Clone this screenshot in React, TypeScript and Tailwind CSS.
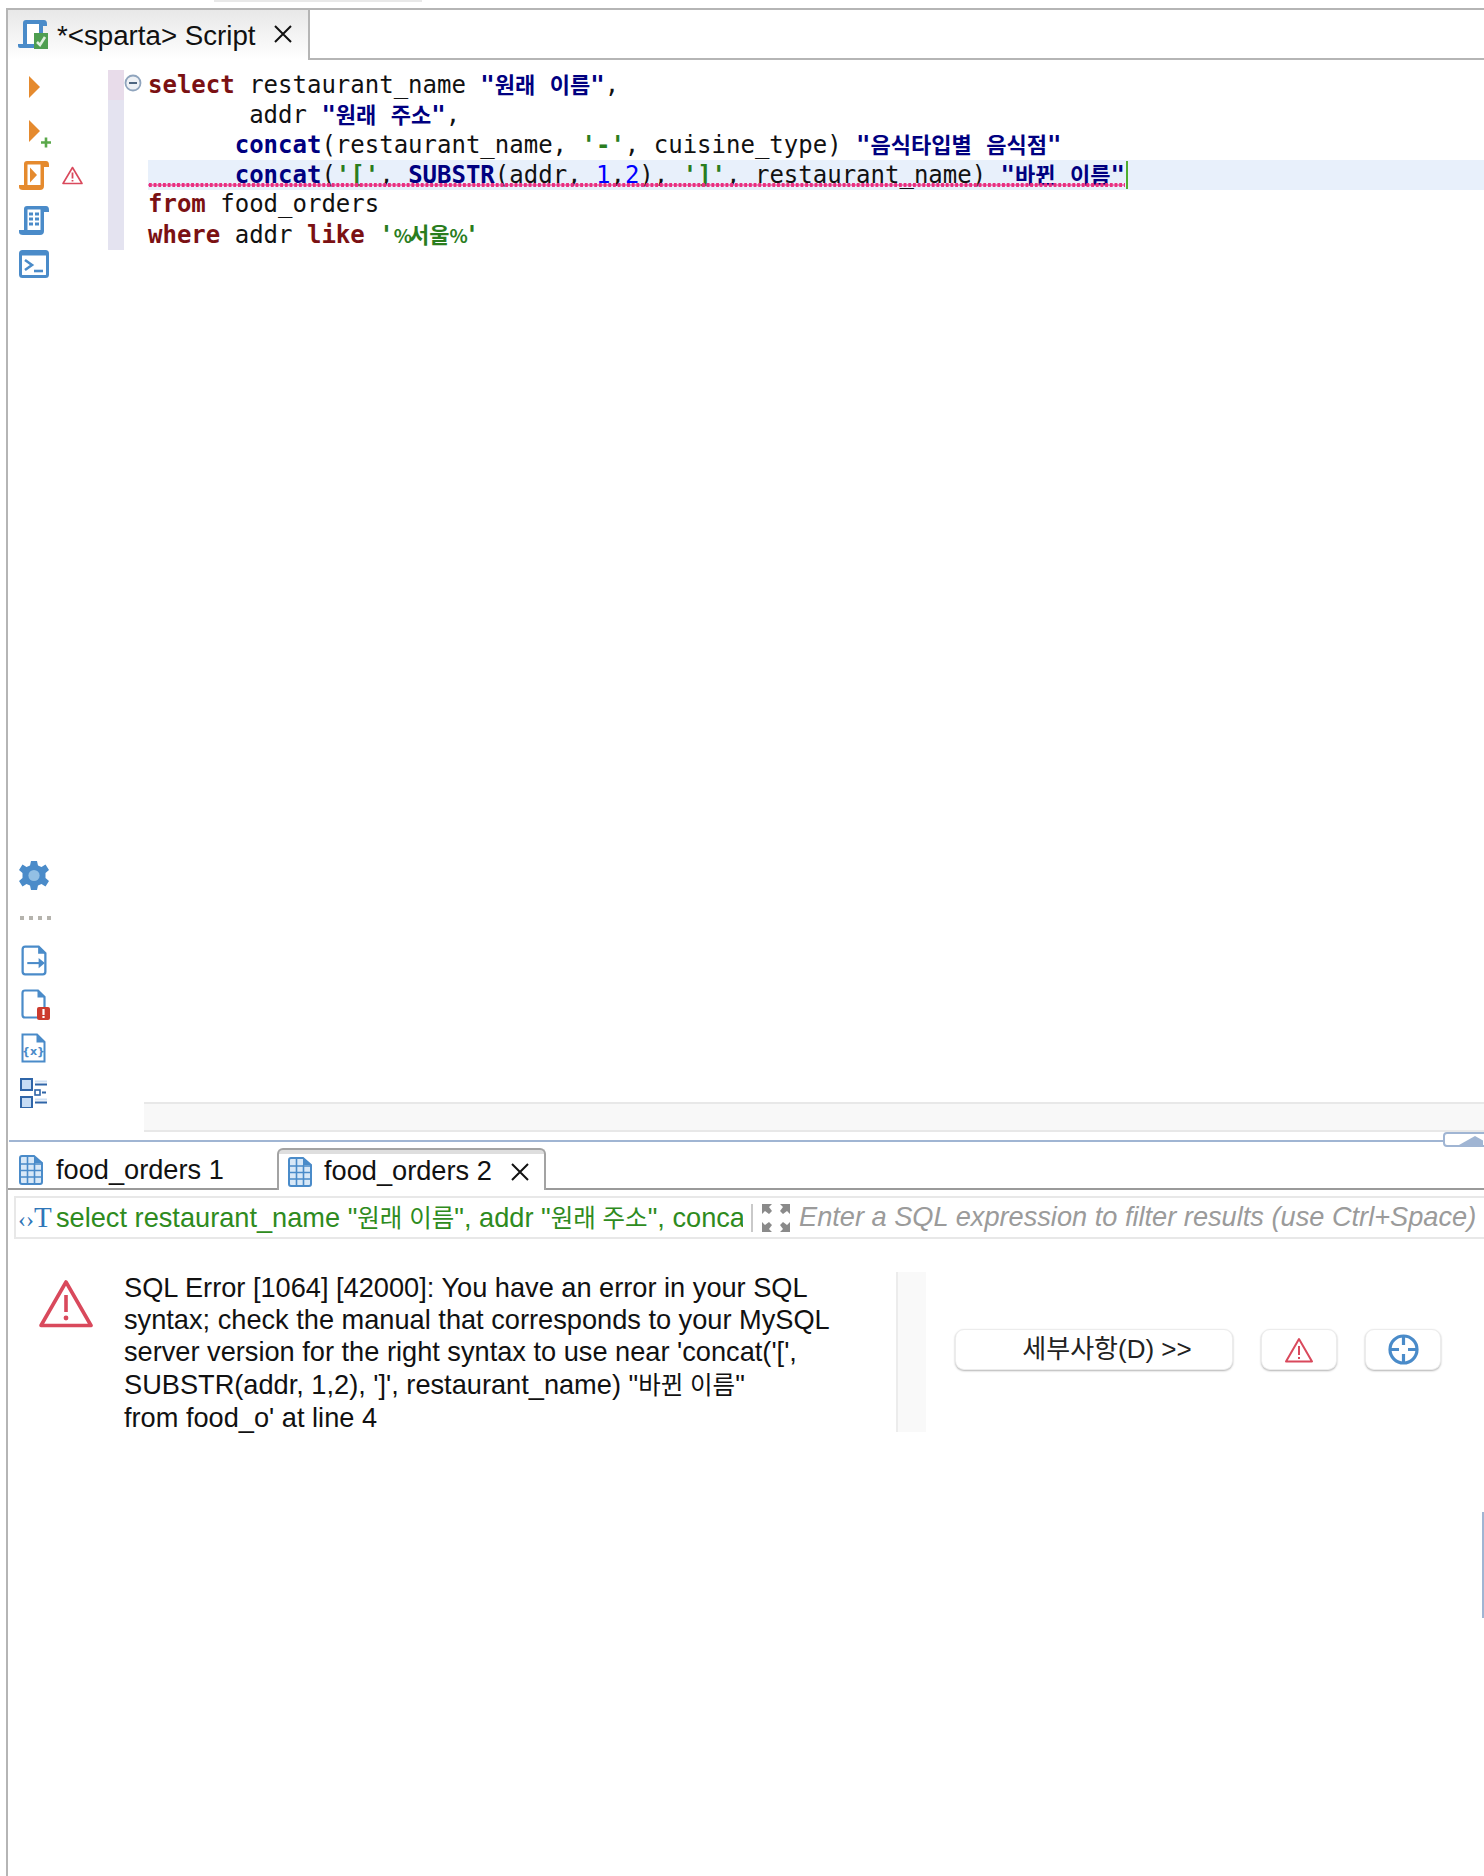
import React from "react";

const BLUE = "#4a8bc9";
const ORANGE = "#e58a2e";
const RED = "#d9495c";

function Kr({ children }: { children: React.ReactNode }) {
  return <span className="text-[22px] font-['Noto_Sans_CJK_KR']">{children}</span>;
}
const Ks = ({ c }: { c: string }) => <span className="text-[24.5px]">{c}</span>;
const Kw = ({ c }: { c: string }) => <span className="font-bold text-[#7b1113]">{c}</span>;
const Fn = ({ c }: { c: string }) => <span className="font-bold text-[#000080]">{c}</span>;
const Str = ({ c }: { c: string }) => <span className="font-bold text-[#2a7d1e]">{c}</span>;
const Num = ({ c }: { c: string }) => <span className="text-[#0000ff]">{c}</span>;
const Alias = ({ a, b }: { a: string; b: string }) => (
  <span className="font-bold text-[#000080]">
    &quot;<Kr>{a}</Kr> <Kr>{b}</Kr>&quot;
  </span>
);

function ScrollIcon({ color, children }: { color: string; children?: React.ReactNode }) {
  return (
    <svg width="30" height="30" viewBox="0 0 30 30">
      <path d="M5 25V4Q5 1 8 1H27Q30 1 30 5V7H25V26Q25 30 21 30H4Q0 30 0 27V25Z" fill={color} />
      <rect x="8.5" y="4.5" width="13" height="20.5" fill="#fff" />
      <path d="M21 25H5V27H21Z" fill={color} />
      {children}
    </svg>
  );
}

function DocOutline({ children }: { children?: React.ReactNode }) {
  return (
    <>
      <path d="M4 1.5H17L23.5 8V26Q23.5 28.5 21 28.5H4Q1.5 28.5 1.5 26V4Q1.5 1.5 4 1.5Z" fill="#fff" stroke={BLUE} strokeWidth="2.2" />
      <path d="M16.5 1.5V8.5H24Z" fill={BLUE} />
      {children}
    </>
  );
}

function TableIcon() {
  return (
    <svg width="24" height="30" viewBox="0 0 24 30" className="shrink-0">
      <path d="M1 3Q1 1 3 1H15L23 8V27Q23 29 21 29H3Q1 29 1 27Z" fill="#d8e8f7" stroke={BLUE} strokeWidth="2" />
      <path d="M15 1V8H23Z" fill={BLUE} />
      <path d="M8.5 2V29M15.5 8V29M1 9H23M1 15.5H23M1 22H23" stroke={BLUE} strokeWidth="1.6" />
    </svg>
  );
}

function Toolbar() {
  return (
    <div className="w-[100px] shrink-0 pl-[11px] flex flex-col justify-between pt-[16px] pb-[32px]">
      <div className="flex flex-col">
        <svg width="24" height="22" viewBox="0 0 24 22" className="ml-[6px]">
          <path d="M4 0L15 11L4 22Z" fill={ORANGE} />
        </svg>
        <svg width="34" height="28" viewBox="0 0 34 28" className="mt-[22px] ml-[6px]">
          <path d="M4 0L15 11L4 22Z" fill={ORANGE} />
          <path d="M16 22.5H26M21 17.5V27.5" stroke="#5aa84a" strokeWidth="2.6" />
        </svg>
        <div className="flex items-center mt-[12px]">
          <ScrollIcon color={ORANGE}>
            <path d="M11 7.5L18 15L11 22.5Z" fill={ORANGE} />
          </ScrollIcon>
          <svg width="21" height="19" viewBox="0 0 21 19" className="ml-[13px]">
            <path d="M10.5 1.5L20 17.5H1Z" fill="#fff" stroke={RED} strokeWidth="1.6" strokeLinejoin="round" />
            <path d="M10.5 6.5V12.5M10.5 14V15.6" stroke={RED} strokeWidth="1.8" />
          </svg>
        </div>
        <div className="mt-[15px]">
          <ScrollIcon color={BLUE}>
            <path d="M10 7.5H14V10.5H10ZM16 7.5H20V10.5H16ZM10 12.5H14V15.5H10ZM16 12.5H20V15.5H16ZM10 17.5H14V20.5H10ZM16 17.5H20V20.5H16Z" fill={BLUE} />
          </ScrollIcon>
        </div>
        <svg width="30" height="28" viewBox="0 0 30 28" className="mt-[15px]">
          <rect x="1.5" y="1.5" width="27" height="25" rx="2" fill="#fff" stroke={BLUE} strokeWidth="3" />
          <rect x="1.5" y="1.5" width="27" height="4" fill={BLUE} />
          <path d="M6 10L13 15L6 20" fill="none" stroke={BLUE} strokeWidth="2.6" />
          <path d="M15 21H24" stroke={BLUE} strokeWidth="2.6" />
        </svg>
      </div>
      <div className="flex flex-col">
        <svg width="30" height="31" viewBox="0 0 30 31">
          <path
            d="M12 1H18L19 5.5L22.5 7L26.5 4.5L30 10L26.5 13V18L30 21L26.5 26.5L22.5 24L19 25.5L18 30H12L11 25.5L7.5 24L3.5 26.5L0 21L3.5 18V13L0 10L3.5 4.5L7.5 7L11 5.5Z"
            fill={BLUE}
          />
          <circle cx="15" cy="15.5" r="5.6" fill="#93c0e4" />
        </svg>
        <div className="flex gap-[5px] mt-[25px] ml-[1px]">
          <span className="w-[4px] h-[4px] bg-[#b5b3ad]" />
          <span className="w-[4px] h-[4px] bg-[#b5b3ad]" />
          <span className="w-[4px] h-[4px] bg-[#b5b3ad]" />
          <span className="w-[4px] h-[4px] bg-[#b5b3ad]" />
        </div>
        <svg width="26" height="31" viewBox="0 0 25 30" className="mt-[25px] ml-[2px]">
          <DocOutline>
            <path d="M6 17.5H20" stroke={BLUE} strokeWidth="2" />
            <path d="M17 12.5L23 17.5L17 22.5Z" fill={BLUE} />
          </DocOutline>
        </svg>
        <svg width="30" height="31" viewBox="0 0 30 31" className="mt-[13px] ml-[2px]">
          <DocOutline />
          <rect x="16" y="18" width="13" height="13" rx="2" fill="#cc3b2e" />
          <path d="M22.5 20V26M22.5 27V29" stroke="#fff" strokeWidth="2.2" />
        </svg>
        <svg width="25" height="30" viewBox="0 0 25 30" className="mt-[13px] ml-[2px]">
          <path d="M1.5 1.5H16L23.5 9V28.5H1.5Z" fill="#fff" stroke={BLUE} strokeWidth="2" />
          <path d="M15.5 1.5V9.5H24Z" fill={BLUE} />
          <text x="12.5" y="22" textAnchor="middle" fontSize="11" fontWeight="700" fill={BLUE} fontFamily="'DejaVu Sans'">
            {"{x}"}
          </text>
        </svg>
        <svg width="27" height="30" viewBox="0 0 27 30" className="mt-[15px] ml-[1px]">
          <rect x="1" y="1" width="11" height="11" fill="#c6dcf5" stroke="#2f65a8" strokeWidth="2" />
          <rect x="1" y="19" width="11" height="11" fill="#c6dcf5" stroke="#2f65a8" strokeWidth="2" />
          <rect x="15" y="12" width="5" height="5" fill="#fff" stroke="#2f65a8" strokeWidth="1.6" />
          <path d="M15 6.5H27M15 24.5H27M22 14.5H26" stroke="#2f65a8" strokeWidth="2" />
          <path d="M15 3.5H27M15 21.5H27" stroke="#cfe0f3" strokeWidth="2" />
        </svg>
      </div>
    </div>
  );
}

function CodeLine({ children, active }: { children: React.ReactNode; active?: boolean }) {
  return (
    <div className={`h-[30px] flex items-center whitespace-pre pb-[3px] ${active ? "bg-[#e8f0fb]" : ""}`}>
      <span className="relative inline-block">
        {children}
        {active && (
          <span className="absolute left-0 right-0 top-[25px] h-[4px] bg-[radial-gradient(circle,#ea2f80_1.8px,transparent_2.1px)] bg-[length:4.7px_4px]" />
        )}
      </span>
      {active && <span className="w-[2px] h-[28px] mt-[3px] bg-[#4fae2e] ml-[1px]" />}
    </div>
  );
}

function Editor() {
  return (
    <div className="h-[1080px] flex">
      <Toolbar />
      <div className="flex-1 min-w-0 flex flex-col pt-[10px]">
        <div className="flex-1 flex">
          <div className="w-[16px] h-[180px] shrink-0 flex flex-col bg-[#e4e3f0]">
            <div className="h-[30px] bg-[#e8dcea]" />
          </div>
          <div className="w-[24px] shrink-0 relative">
            <svg width="18" height="18" viewBox="0 0 18 18" className="absolute left-0 top-[4px]">
              <circle cx="9" cy="9" r="7.5" fill="#eef1f5" stroke="#8fa4bd" strokeWidth="1.8" />
              <path d="M5 9H13" stroke="#4d6580" strokeWidth="2" />
            </svg>
          </div>
          <div className="flex-1 min-w-0 font-['DejaVu_Sans_Mono'] text-[24px] leading-[30px] text-[#111]">
            <CodeLine>
              <Kw c="select" /> restaurant_name <Alias a="원래" b="이름" />,
            </CodeLine>
            <CodeLine>
              {"       addr "}
              <Alias a="원래" b="주소" />,
            </CodeLine>
            <CodeLine>
              {"      "}
              <Fn c="concat" />
              (restaurant_name, <Str c="'-'" />, cuisine_type) <Alias a="음식타입별" b="음식점" />
            </CodeLine>
            <CodeLine active>
              {"      "}
              <Fn c="concat" />
              (<Str c="'['" />, <Fn c="SUBSTR" />
              (addr, <Num c="1" />,<Num c="2" />
              ), <Str c="']'" />, restaurant_name) <Alias a="바뀐" b="이름" />
            </CodeLine>
            <CodeLine>
              <Kw c="from" /> food_orders
            </CodeLine>
            <CodeLine>
              <Kw c="where" /> addr <Kw c="like" />{" "}
              <span className="font-bold text-[#2a7d1e]">
                '<span className="text-[19px] tracking-[-3px] font-['Noto_Sans_CJK_KR']">%</span>
                <Kr>서울</Kr>
                <span className="text-[19px] tracking-[-3px] font-['Noto_Sans_CJK_KR']">%</span>'
              </span>
            </CodeLine>
          </div>
        </div>
        <div className="h-[30px] ml-[36px] mb-[8px] bg-[#f8f8f8] border-y-2 border-[#e8e8e8]" />
      </div>
    </div>
  );
}

function ResultTabs() {
  return (
    <div className="h-[48px] flex items-end">
      <div className="w-[269px] h-[42px] border-b-2 border-[#9a9a9a] flex items-center pl-[11px] pt-[4px]">
        <TableIcon />
        <span className="ml-[13px] text-[27.2px] text-[#111]">food_orders 1</span>
      </div>
      <div className="w-[269px] h-[42px] border-2 border-b-0 border-[#a3a3a3] rounded-t-[6px] bg-[linear-gradient(#dedede_0,#dedede_4px,#fff_4px)] flex items-center pl-[9px] pt-[3px]">
        <TableIcon />
        <span className="ml-[12px] text-[27.2px] text-[#111]">food_orders 2</span>
        <svg width="20" height="20" viewBox="0 0 20 20" className="ml-[18px]">
          <path d="M2 2L18 18M18 2L2 18" stroke="#111" strokeWidth="2" />
        </svg>
      </div>
      <div className="flex-1 h-[2px] bg-[#9a9a9a]" />
    </div>
  );
}

function FilterBar() {
  return (
    <div className="ml-[6px] mt-[6px] h-[43px] border-y-2 border-l-2 border-[#e8e8e8] flex items-center">
      <span className="w-[40px] shrink-0 pl-[2px] flex items-baseline text-[#2f76b8] font-['Liberation_Serif']">
        <span className="text-[24px] leading-none">‹›</span>
        <span className="text-[29px] leading-none font-light">T</span>
      </span>
      <div className="w-[687px] shrink-0 overflow-hidden whitespace-nowrap text-[27.2px] pt-[2px] text-[#2e8b20]">
        select restaurant_name "<Ks c="원래 이름" />", addr "<Ks c="원래 주소" />", concat('[', SUBSTR(addr, 1,2)
      </div>
      <span className="ml-[8px] w-[2px] h-[28px] bg-[#c9c9c9] shrink-0" />
      <svg width="30" height="30" viewBox="0 0 30 30" className="ml-[8px] shrink-0">
        <g fill="#8a8a8a">
          <path d="M1 1H11L8 4L11 8L8 11L4 8L1 11ZM29 1H19L22 4L19 8L22 11L26 8L29 11ZM1 29H11L8 26L11 22L8 19L4 22L1 19ZM29 29H19L22 26L19 22L22 19L26 22L29 19Z" />
        </g>
      </svg>
      <span className="ml-[8px] italic whitespace-nowrap text-[27.2px] text-[#9b9b9b]">
        Enter a SQL expression to filter results (use Ctrl+Space)
      </span>
    </div>
  );
}

function SmallBtn({ children }: { children: React.ReactNode }) {
  return (
    <div className="w-[76px] h-[41px] shrink-0 rounded-[9px] bg-white border border-[#ececec] shadow-[0_1px_2px_rgba(0,0,0,0.3)] flex items-center justify-center">
      {children}
    </div>
  );
}

function ErrorPanel() {
  return (
    <div className="flex mt-[33px] h-[160px]">
      <svg width="54" height="50" viewBox="0 0 54 50" className="ml-[31px] mt-[7px] shrink-0">
        <path d="M27 3L52 46.5H2Z" fill="#fff" stroke={RED} strokeWidth="3.6" strokeLinejoin="round" />
        <path d="M27 16V33" stroke={RED} strokeWidth="3.6" />
        <circle cx="27" cy="39" r="2.4" fill={RED} />
      </svg>
      <div className="ml-[31px] w-[772px] shrink-0 text-[27.2px] leading-[32.2px] text-[#111]">
        <div className="whitespace-nowrap">SQL Error [1064] [42000]: You have an error in your SQL</div>
        <div className="whitespace-nowrap">syntax; check the manual that corresponds to your MySQL</div>
        <div className="whitespace-nowrap">server version for the right syntax to use near 'concat('[',</div>
        <div className="whitespace-nowrap">
          SUBSTR(addr, 1,2), ']', restaurant_name) "<Ks c="바뀐 이름" />"
        </div>
        <div className="whitespace-nowrap">from food_o' at line 4</div>
      </div>
      <div className="w-[30px] shrink-0 bg-[#f9f9f9] border-l-2 border-[#ececec]" />
      <div className="ml-[29px] flex items-center gap-[28px] pb-[5px]">
        <div className="w-[278px] h-[41px] shrink-0 rounded-[9px] bg-white border border-[#ececec] shadow-[0_1px_2px_rgba(0,0,0,0.3)] flex items-center justify-center pl-[26px] text-[26px] text-[#222]">
          세부사항(D) &gt;&gt;
        </div>
        <SmallBtn>
          <svg width="30" height="26" viewBox="0 0 30 26">
            <path d="M15 2L28 24.5H2Z" fill="#fff" stroke={RED} strokeWidth="2" strokeLinejoin="round" />
            <path d="M15 9V18M15 20V22" stroke={RED} strokeWidth="2" />
          </svg>
        </SmallBtn>
        <SmallBtn>
          <svg width="31" height="31" viewBox="0 0 31 31">
            <circle cx="15.5" cy="15.5" r="13.5" fill="#fff" stroke={BLUE} strokeWidth="3.2" />
            <path d="M15.5 3V11M15.5 20V28M3 15.5H11M20 15.5H28" stroke={BLUE} strokeWidth="3.2" />
          </svg>
        </SmallBtn>
      </div>
    </div>
  );
}

export default function App() {
  return (
    <div className="relative w-[1484px] h-[1876px] overflow-hidden bg-white font-['Liberation_Sans','Noto_Sans_CJK_KR',sans-serif]">
      <div className="h-[8px]">
        <div className="ml-[214px] w-[208px] h-[2px] bg-[#e8e8e8]" />
      </div>
      <div className="ml-[6px] h-[1868px] border-l-2 border-t-2 border-[#b5b5b5]">
        <div className="h-[50px] flex">
          <div className="w-[302px] h-full shrink-0 border-r-2 border-[#b5b5b5] bg-[linear-gradient(#e8e8e8,#ffffff)] flex items-center pl-[9px] pb-[2px]">
            <svg width="32" height="32" viewBox="0 0 32 32" className="shrink-0">
              <path d="M6 27V5Q6 2 9 2H27Q30 2 30 6V8H26V27Z" fill={BLUE} />
              <rect x="10" y="6" width="12" height="20" fill="#fff" />
              <path d="M1 26H22V30H3Q1 30 1 28Z" fill={BLUE} />
              <rect x="17" y="15" width="14" height="16" fill="#4e9e50" />
              <path d="M20 24L23 27L28 19" fill="none" stroke="#dff0df" strokeWidth="2.6" />
            </svg>
            <span className="ml-[8px] mt-[3px] text-[27.7px] whitespace-nowrap text-[#111]">*&lt;sparta&gt; Script</span>
            <svg width="20" height="20" viewBox="0 0 20 20" className="ml-[17px] shrink-0">
              <path d="M2 2L18 18M18 2L2 18" stroke="#111" strokeWidth="2" />
            </svg>
          </div>
          <div className="flex-1 border-b-2 border-[#b5b5b5]" />
        </div>
        <Editor />
        <div className="h-[2px] ml-[1px] bg-[#a0b5d3]" />
        <ResultTabs />
        <FilterBar />
        <ErrorPanel />
      </div>
      <div className="absolute left-[1443px] top-[1132px] w-[50px] h-[15px] bg-white border-2 border-[#a0b5d3] rounded-[4px]">
        <svg width="24" height="9" viewBox="0 0 24 9" className="absolute left-[14px] top-[2px]">
          <path d="M0 9L16 0L32 9Z" fill="#a0b5d3" />
        </svg>
      </div>
      <div className="absolute left-[1482px] top-[1512px] w-[2px] h-[106px] bg-[#a0b5d3]" />
    </div>
  );
}
